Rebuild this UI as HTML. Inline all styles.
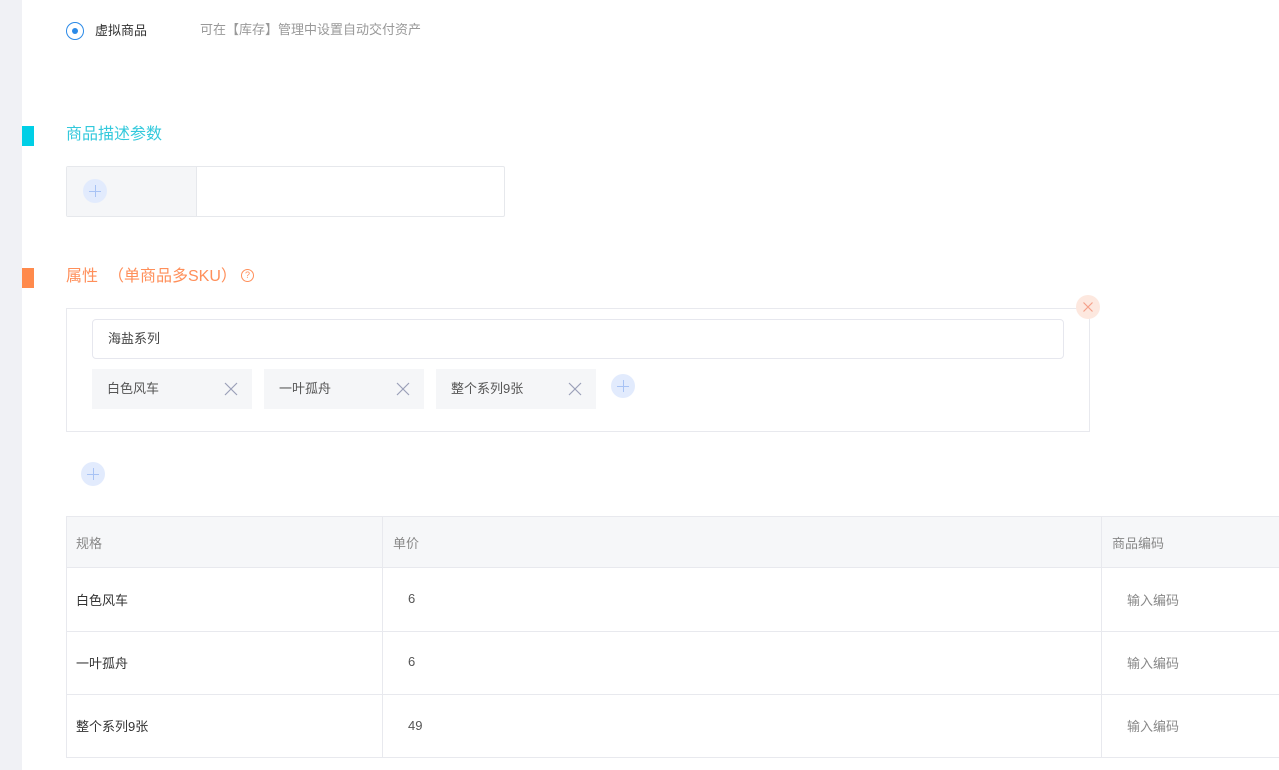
<!DOCTYPE html>
<html><head><meta charset="utf-8"><style>
*{margin:0;padding:0;box-sizing:border-box}
body{width:1279px;height:770px;overflow:hidden;background:#fff;font-family:"Liberation Sans","Noto Sans CJK SC",sans-serif;font-size:13px;line-height:18px;color:#333;position:relative}
.a{position:absolute}
.side{left:0;top:0;width:22px;height:770px;background:#f0f1f5}
.plus{width:24px;height:24px;border-radius:50%;background:#e2ebfd}
.plus:before,.plus:after{content:"";position:absolute;background:#a8c3f5;left:6px;top:11.5px;width:12px;height:1px}
.plus:after{left:11.5px;top:6px;width:1px;height:12px}
.tag{top:369px;width:160px;height:40px;background:#f5f6f8;color:#555;line-height:40px;padding-left:15px}
.tag svg{position:absolute;right:14px;top:13px}
.cell{border-right:1px solid #e8e9ee}
.n{color:#555}
</style></head><body>
<div class="a side"></div>
<div class="a" style="left:66px;top:22px;width:18px;height:18px;border:1.5px solid #2b8ae8;border-radius:50%"><div style="position:absolute;left:4.5px;top:4.5px;width:6px;height:6px;border-radius:50%;background:#2b8ae8"></div></div>
<div class="a" style="left:95px;top:22px;color:#333">虚拟商品</div>
<div class="a" style="left:200px;top:21px;color:#999">可在【库存】管理中设置自动交付资产</div>

<div class="a" style="left:22px;top:126px;width:12px;height:20px;background:#00cfe6"></div>
<div class="a" style="left:66px;top:124px;font-size:16px;line-height:22px;color:#33c9dc">商品描述参数</div>
<div class="a" style="left:66px;top:166px;width:439px;height:51px;border:1px solid #e6e8ec;border-radius:2px"></div>
<div class="a" style="left:67px;top:167px;width:130px;height:49px;background:#f5f6f8;border-right:1px solid #e6e8ec"></div>
<div class="a plus" style="left:83px;top:179px"></div>

<div class="a" style="left:22px;top:268px;width:12px;height:20px;background:#ff8a4c"></div>
<div class="a" style="left:66px;top:266px;font-size:16px;line-height:22px;color:#ff8f5a">属性</div>
<div class="a" style="left:108px;top:266px;font-size:16px;line-height:22px;color:#ff8f5a">（单商品多SKU）</div>
<div class="a" style="left:241px;top:269px;width:13px;height:13px;border:1.2px solid #ff8f5a;border-radius:50%;color:#ff8f5a;font-size:9px;line-height:11px;text-align:center">?</div>

<div class="a" style="left:66px;top:308px;width:1024px;height:124px;border:1px solid #e8e9ee"></div>
<div class="a" style="left:1076px;top:295px;width:24px;height:24px;border-radius:50%;background:#fde8df"><svg width="24" height="24" style="position:absolute;left:0;top:0"><path d="M7.5 7.5L16.5 16.5M16.5 7.5L7.5 16.5" stroke="#f5a08a" stroke-width="1.2"/></svg></div>
<div class="a" style="left:92px;top:319px;width:972px;height:40px;border:1px solid #e6e7ee;border-radius:4px;padding-left:15px;line-height:38px;color:#444">海盐系列</div>
<div class="a tag" style="left:92px">白色风车<svg width="14" height="14"><path d="M1 1L13 13M13 1L1 13" stroke="#9aa0b8" stroke-width="1.2"/></svg></div>
<div class="a tag" style="left:264px">一叶孤舟<svg width="14" height="14"><path d="M1 1L13 13M13 1L1 13" stroke="#9aa0b8" stroke-width="1.2"/></svg></div>
<div class="a tag" style="left:436px">整个系列9张<svg width="14" height="14"><path d="M1 1L13 13M13 1L1 13" stroke="#9aa0b8" stroke-width="1.2"/></svg></div>
<div class="a plus" style="left:611px;top:374px"></div>
<div class="a plus" style="left:81px;top:462px"></div>

<div class="a" style="left:66px;top:516px;width:1213px;height:242px;border-left:1px solid #e8e9ee;border-top:1px solid #e8e9ee"></div>
<div class="a" style="left:67px;top:517px;width:1212px;height:50px;background:#f6f7f9"></div>
<div class="a cell" style="left:67px;top:517px;width:316px;height:241px"></div>
<div class="a cell" style="left:383px;top:517px;width:719px;height:241px"></div>
<div class="a" style="left:67px;top:567px;width:1212px;border-top:1px solid #e8e9ee"></div>
<div class="a" style="left:67px;top:631px;width:1212px;border-top:1px solid #e8e9ee"></div>
<div class="a" style="left:67px;top:694px;width:1212px;border-top:1px solid #e8e9ee"></div>
<div class="a" style="left:67px;top:757px;width:1212px;border-top:1px solid #e8e9ee"></div>
<div class="a" style="left:76px;top:535px;color:#888">规格</div>
<div class="a" style="left:393px;top:535px;color:#888">单价</div>
<div class="a" style="left:1112px;top:535px;color:#888">商品编码</div>
<div class="a" style="left:76px;top:592px">白色风车</div>
<div class="a" style="left:76px;top:655px">一叶孤舟</div>
<div class="a" style="left:76px;top:718px">整个系列9张</div>
<div class="a n" style="left:408px;top:590px">6</div>
<div class="a n" style="left:408px;top:653px">6</div>
<div class="a n" style="left:408px;top:717px">49</div>
<div class="a" style="left:1127px;top:592px;color:#888">输入编码</div>
<div class="a" style="left:1127px;top:655px;color:#888">输入编码</div>
<div class="a" style="left:1127px;top:718px;color:#888">输入编码</div>
</body></html>
